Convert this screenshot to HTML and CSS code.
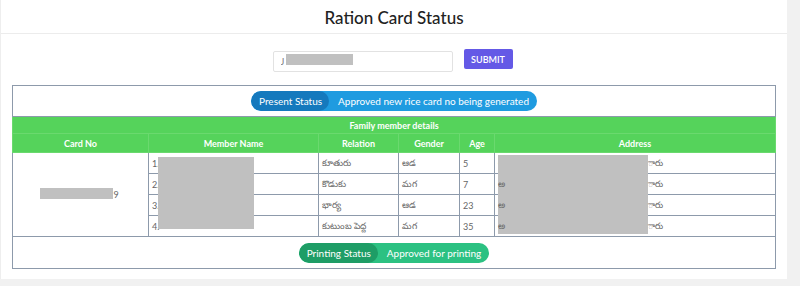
FILE: index.html
```html
<!DOCTYPE html>
<html lang="en">
<head>
    <meta charset="UTF-8">
    <meta name="viewport" content="width=device-width, initial-scale=1.0">
    <title>Ration Card Status</title>
    <link rel="stylesheet" href="styles.css">
</head>
<body>
    <div class="card">
        <div class="card-header">Ration Card Status</div>
        <div class="card-body">
            <form class="search">
                <div class="input-wrap">
                    <input type="text" value="J">
                    <span class="mask mask-input"></span>
                </div>
                <button type="button">SUBMIT</button>
            </form>

            <table class="details">
                <colgroup>
                    <col class="c-card">
                    <col class="c-name">
                    <col class="c-rel">
                    <col class="c-gen">
                    <col class="c-age">
                    <col>
                </colgroup>
                <tr>
                    <td colspan="6" class="status-cell">
                        <span class="pill pill-blue">
                            <span class="pill-label">Present Status</span>
                            <span class="pill-value">Approved new rice card no being generated</span>
                        </span>
                    </td>
                </tr>
                <tr class="head">
                    <th colspan="6" class="caption">Family member details</th>
                </tr>
                <tr class="head">
                    <th class="col-title">Card No</th>
                    <th>Member Name</th>
                    <th>Relation</th>
                    <th>Gender</th>
                    <th>Age</th>
                    <th>Address</th>
                </tr>
                <tr>
                    <td rowspan="4" class="card-no"><span class="mask mask-card"></span>9</td>
                    <td class="name">1.<span class="mask mask-name"></span></td>
                    <td>కూతురు</td>
                    <td>ఆడ</td>
                    <td>5</td>
                    <td class="addr">అ<span class="addr-end">ారు</span><span class="mask mask-addr"></span></td>
                </tr>
                <tr>
                    <td>2.</td>
                    <td>కొడుకు</td>
                    <td>మగ</td>
                    <td>7</td>
                    <td class="addr">అ<span class="addr-end">ారు</span></td>
                </tr>
                <tr>
                    <td>3.</td>
                    <td>భార్య</td>
                    <td>ఆడ</td>
                    <td>23</td>
                    <td class="addr">అ<span class="addr-end">ారు</span></td>
                </tr>
                <tr>
                    <td>4.</td>
                    <td>కుటుంబ పెద్ద</td>
                    <td>మగ</td>
                    <td>35</td>
                    <td class="addr">అ<span class="addr-end">ారు</span></td>
                </tr>
                <tr>
                    <td colspan="6" class="status-cell last">
                        <span class="pill pill-green">
                            <span class="pill-label">Printing Status</span>
                            <span class="pill-value">Approved for printing</span>
                        </span>
                    </td>
                </tr>
            </table>
        </div>
    </div>
</body>
</html>
```

FILE: styles.css
```css
body {
    margin: 0;
    background: #f1f1f1;
    font-family: Lato, 'Open Sans', Arial, sans-serif;
    color: #333;
}
.card {
    width: 786px;
    height: 279px;
    background: #fff;
    border-left: 1px solid #eee;
}
.card-header {
    height: 33px;
    line-height: 36px;
    text-align: center;
    font-size: 17px;
    font-weight: 500;
    color: #222;
    border-bottom: 1px solid #ececec;
}
.card-body {
    padding: 15px 11px 0 11px;
}
.search {
    display: flex;
    justify-content: center;
    align-items: flex-start;
    gap: 11px;
    margin: 0 3px 0 0;
}
.input-wrap {
    position: relative;
}
.search input {
    width: 180px;
    height: 21px;
    box-sizing: border-box;
    border: 1px solid #e2e2e2;
    border-radius: 2px;
    padding: 0 7px;
    font-size: 9px;
    color: #777;
    font-family: inherit;
}
.search button {
    width: 49px;
    height: 20px;
    border: none;
    border-radius: 2px;
    background: #6459e6;
    color: #fff;
    font-size: 9px;
    font-weight: 600;
    font-family: inherit;
    padding: 0;
}
.mask {
    position: absolute;
    background: #c0c0c0;
}
.mask-input {
    left: 13px;
    top: 5px;
    width: 67px;
    height: 11px;
}
.details {
    width: 764px;
    margin-top: 13px;
    border-collapse: collapse;
    table-layout: fixed;
    border: 1px solid #8d9aab;
    font-size: 9px;
}
.c-card { width: 136px; }
.c-name { width: 170px; }
.c-rel { width: 80px; }
.c-gen { width: 61px; }
.c-age { width: 35px; }
.details td.status-cell {
    height: 30px;
    text-align: center;
    padding: 0;
}
.details td.status-cell.last {
    height: 31px;
}
.pill {
    display: inline-flex;
    height: 20px;
    border-radius: 10px;
    overflow: hidden;
    color: #fff;
    font-size: 10px;
    line-height: 20px;
    vertical-align: middle;
}
.pill-label {
    padding: 0 7px 0 8px;
    border-radius: 10px;
}
.pill-value {
    padding: 0 8px 0 9px;
}
.pill-blue {
    background: #1f9be0;
}
.pill-blue .pill-label {
    background: #1579bd;
}
.pill-green {
    background: #2cc182;
}
.pill-green .pill-label {
    background: #1e9d66;
}
.head th {
    background: #55d35b;
    color: #fff;
    font-size: 9px;
    font-weight: 700;
    border: 1px solid #6ad96e;
    border-top-color: #7de081;
    padding: 0;
}
.head th.caption {
    height: 16px;
}
.head th.col-title {
    height: 18px;
}
.details td {
    border: 1px solid #8d9aab;
    height: 20px;
    padding: 0 3px;
    color: #666;
    vertical-align: middle;
}
.details td.card-no {
    position: relative;
    text-align: center;
    padding-left: 74px;
}
.mask-card {
    left: 27px;
    top: 35px;
    width: 73px;
    height: 11px;
}
.details td.name,
.details td.addr {
    position: relative;
}
.mask-name {
    left: 9px;
    top: 4px;
    width: 96px;
    height: 72px;
}
.addr-end {
    margin-left: 143px;
}
.mask-addr {
    left: 3px;
    top: 2px;
    width: 150px;
    height: 79px;
}
```
